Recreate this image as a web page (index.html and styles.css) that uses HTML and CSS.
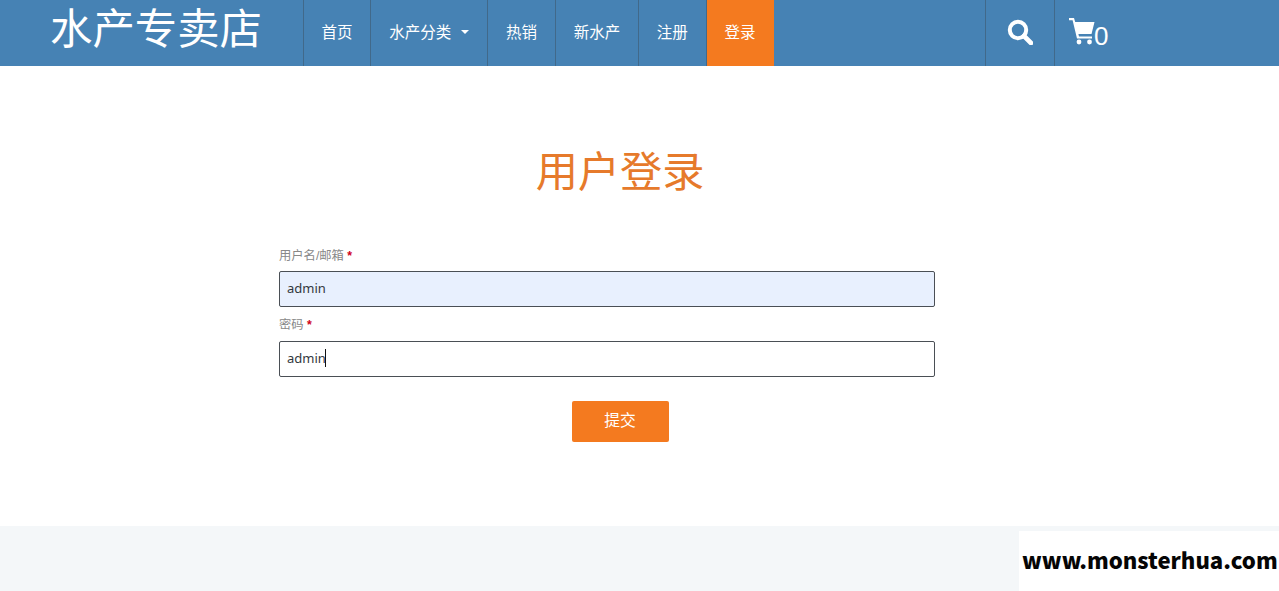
FILE: index.html
```html
<!DOCTYPE html>
<html lang="zh">
<head>
<meta charset="utf-8">
<title>用户登录</title>
<link rel="stylesheet" href="styles.css">
</head>
<body>
<header class="topbar">
  <a class="brand" href="#">水产专卖店</a>
  <nav class="nav">
    <a class="nav-item" href="#">首页</a>
    <a class="nav-item" href="#">水产分类<span class="caret"></span></a>
    <a class="nav-item" href="#">热销</a>
    <a class="nav-item" href="#">新水产</a>
    <a class="nav-item" href="#">注册</a>
    <a class="nav-item active" href="#">登录</a>
  </nav>
  <div class="tools">
    <a class="tool tool-search" href="#" aria-label="搜索">
      <svg width="26" height="26" viewBox="0 0 26 26"><circle cx="11" cy="11" r="8.2" fill="none" stroke="#fff" stroke-width="4"/><path d="M17 17l7 7" stroke="#fff" stroke-width="4.6" stroke-linecap="round"/></svg>
    </a>
    <a class="tool tool-cart" href="#" aria-label="购物车">
      <svg width="26" height="28" viewBox="0 0 26 28"><path d="M0 1h5l1.2 4H25.5l-3 12H9.4l.6 2.4h13v2.2H8L3.6 3.2H0z" fill="#fff"/><circle cx="10" cy="25" r="2.4" fill="#fff"/><circle cx="20.5" cy="25" r="2.4" fill="#fff"/></svg>
      <span class="count">0</span>
    </a>
  </div>
</header>
<main class="main">
  <h1 class="title">用户登录</h1>
  <form class="form">
    <label class="label" for="user">用户名/邮箱 <b class="req">*</b></label>
    <div class="field field-first"><input class="input autofilled" id="user" type="text" value="admin"></div>
    <label class="label label-second" for="pass">密码 <b class="req">*</b></label>
    <div class="field"><input class="input" id="pass" type="text" value="admin"><span class="text-caret"></span></div>
    <div class="actions"><button class="submit" type="button">提交</button></div>
  </form>
</main>
<footer class="footer"></footer>
<div class="watermark">www.monsterhua.com</div>
</body>
</html>
```
FILE: styles.css
```css
* { box-sizing: border-box; }
html, body { margin: 0; height: 591px; overflow: hidden; }
body {
  display: flex;
  flex-direction: column;
  background: #fff;
  font-family: "Liberation Sans", "Noto Sans CJK SC", sans-serif;
}
a { text-decoration: none; color: inherit; }

.topbar { display: flex; height: 66px; background: #4682b4; color: #fff; flex: none; }
.brand { width: 302.7px; padding-left: 50px; font-size: 42.4px; line-height: 60px; }
.nav { display: flex; flex: 1; }
.nav-item {
  display: flex;
  align-items: center;
  height: 66px;
  padding: 0 17.85px 5px;
  border-left: 1px solid #41698a;
  font-size: 15.5px;
}
.caret {
  width: 0; height: 0; margin-left: 10px; margin-top: 3px;
  border-top: 4px solid #fff;
  border-left: 4px solid transparent;
  border-right: 4px solid transparent;
}
.nav-item.active { padding-right: 18.4px; background: #f47a1f; }
.tools { display: flex; margin-right: 155px; }
.tool { display: flex; align-items: center; border-left: 1px solid #41698a; }
.tool-search { width: 69px; padding-left: 21px; padding-bottom: 3px; }
.tool-cart { width: 70px; padding-left: 14px; padding-bottom: 4px; }
.count { font-size: 26px; line-height: 30px; margin-top: 10px; margin-left: -1px; }

.main { flex: 1; width: 682px; margin-left: 279px; }
.title {
  margin: 80px 0 0;
  font-size: 42.2px;
  line-height: 54px;
  font-weight: 400;
  color: #e67a2b;
  text-align: center;
}
.form { margin-top: 47px; }
.label { display: block; height: 24px; font-size: 12.3px; line-height: 19px; color: #888; }
.label-second { height: 25px; }
.req { color: #d0021b; font-weight: 700; }
.field { position: relative; width: 656px; height: 36px; margin-bottom: 10px; }
.field-first { margin-bottom: 9px; }
.input {
  display: block;
  width: 100%;
  height: 100%;
  padding: 0 7px 2px;
  border: 1px solid #4a4f55;
  border-radius: 2px;
  background: #fff;
  color: #33383d;
  font-family: "Noto Sans", sans-serif;
  font-size: 13px;
  outline: none;
}
.autofilled { background: #e8f0fe; }
.text-caret { position: absolute; left: 46px; top: 8px; width: 1px; height: 18px; background: #111; }
.actions { display: flex; justify-content: center; margin-top: 24px; }
.submit {
  width: 97px;
  height: 41px;
  padding: 0 0 5px;
  border: 0;
  border-radius: 2px;
  background: #f47a1f;
  color: #fff;
  font-family: inherit;
  font-size: 15.8px;
}

.footer { height: 65px; flex: none; background: #f4f7f9; }
.watermark {
  position: absolute;
  left: 1019px;
  top: 531px;
  width: 260px;
  height: 60px;
  padding-left: 3px;
  background: #fff;
  color: #050505;
  font-family: "Noto Sans CJK SC", sans-serif;
  font-weight: 900;
  font-size: 22.1px;
  line-height: 57px;
  white-space: nowrap;
}
```
